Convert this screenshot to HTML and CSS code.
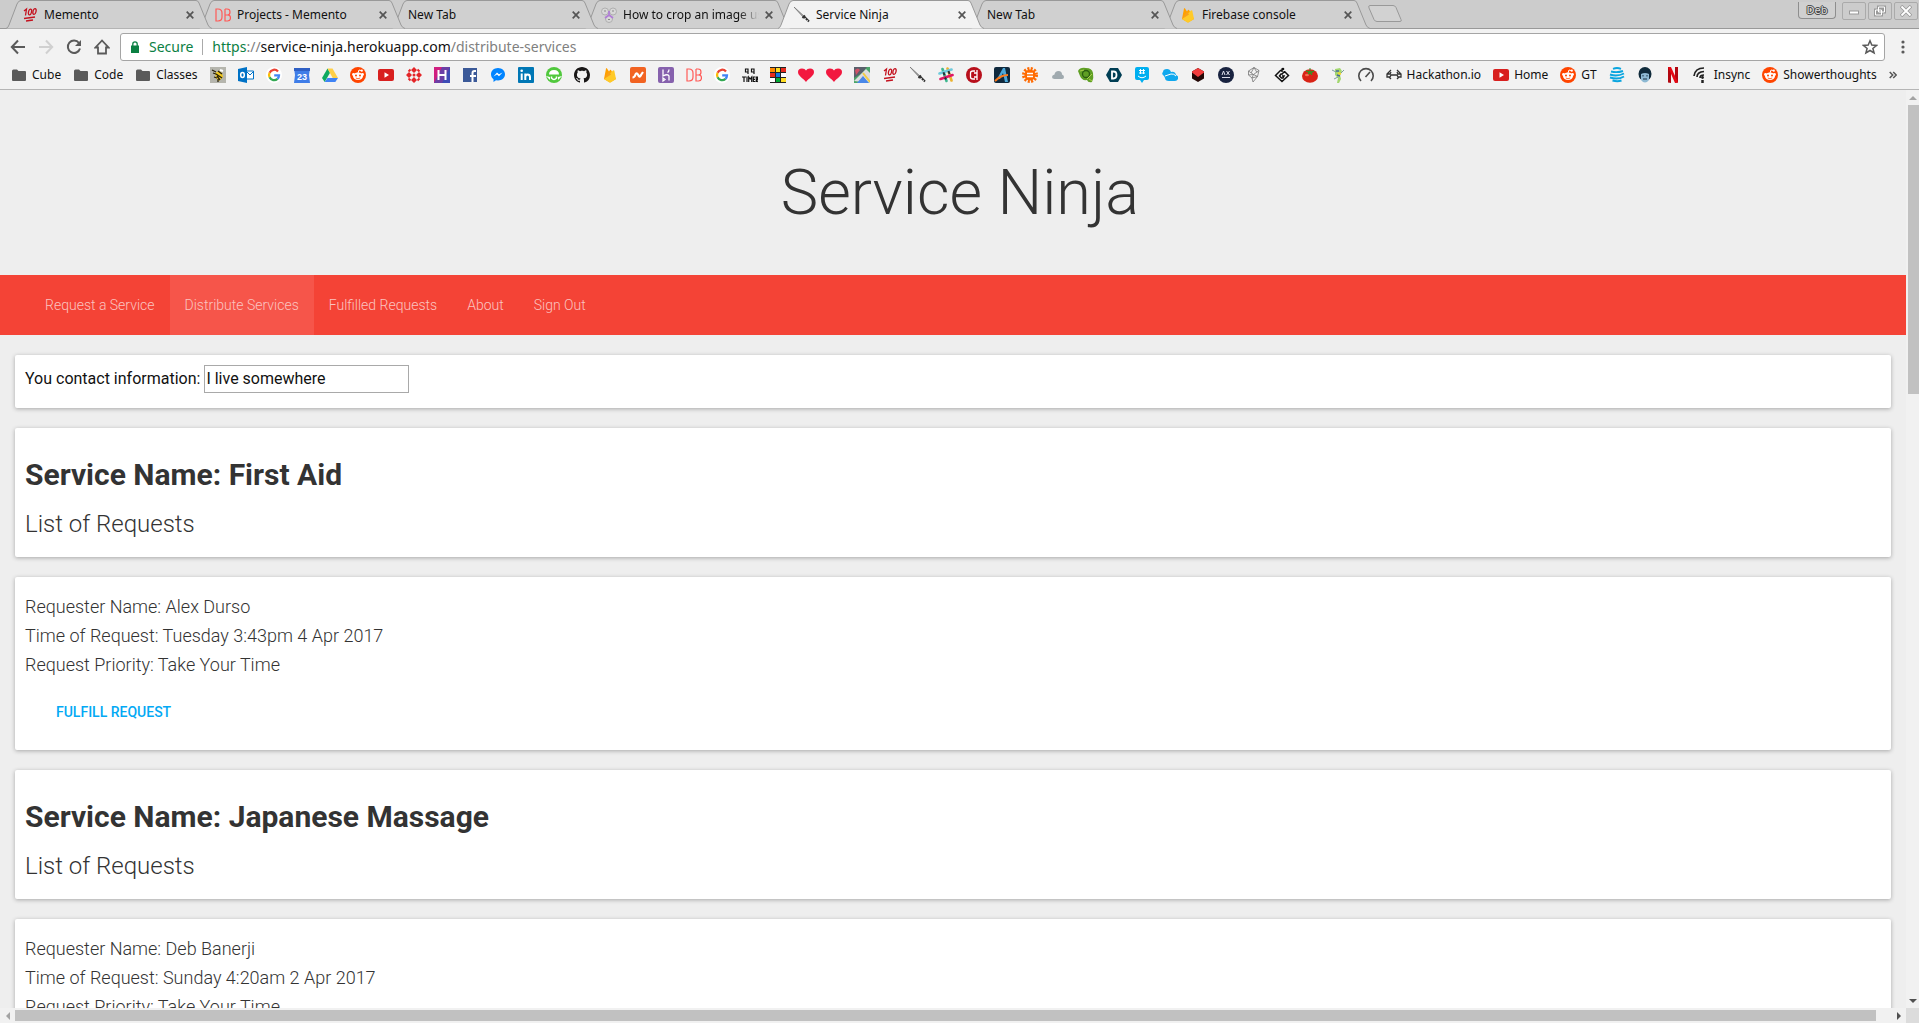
FILE: index.html
```html
<!DOCTYPE html>
<html lang="en">
<head>
<meta charset="utf-8">
<title>Service Ninja</title>
<link rel="stylesheet" href="styles.css">
</head>
<body>
<svg class="sprite" aria-hidden="true">
  <symbol id="tab" viewBox="0 0 206 29"><path d="M0 28.5Q2 28 3 25L11 4Q12.500 .5 15 .5H190Q192 .5 193 3L202 25Q203.500 28 206 28.500"/></symbol>
  <symbol id="x" viewBox="0 0 8 8"><path d="M.7.7l6.600 6.600M7.300.7L.7 7.300" stroke="#555" stroke-width="1.700"/></symbol>
  <symbol id="folder" viewBox="0 0 16 16"><path d="M1 4q0-1.500 1.500-1.500H6L7.500 4H14q1 0 1 1v8q0 1-1 1H2q-1 0-1-1z" fill="#5a5a5a"/></symbol>
  <symbol id="hundred" viewBox="0 0 16 16"><g fill="none" stroke="#c4121f" stroke-width="1.300"><path d="M2 4l2.500-2-1 6.500"/><ellipse cx="8" cy="5" rx="1.500" ry="3" transform="rotate(14 8 5)"/><ellipse cx="12.500" cy="4.500" rx="1.500" ry="3" transform="rotate(14 12.500 4.500)"/><path d="M2 11.500l11-1.500M4 14l7-1"/></g></symbol>
  <symbol id="db" viewBox="0 0 16 16"><path d="M1 2v12h2q4 0 4-4V6q0-4-4-4zM10 2v12h2.500q3 0 3-3t-3-3H10M12.500 8Q15 8 15 5t-3-3h-2" fill="none" stroke="#ff5a57" stroke-width="1.200"/></symbol>
  <symbol id="fire" viewBox="0 0 16 16"><path d="M2 12L4 1.500q.5-.8 1 0l2 3 1-1.500q.5-.6 1 0L14 12l-6 3.500z" fill="#ffa000"/><path d="M2 12l9-8.500q1-.8 1.300.3L14 12l-5 3.200q-1 .6-2 0z" fill="#ffca28"/><path d="M2 12l5-7.500 2 3z" fill="#f9a01b"/></symbol>
  <symbol id="sword" viewBox="0 0 16 16"><path d="M0 0l11 10-1 1z" fill="#aaa" stroke="#777" stroke-width=".8"/><path d="M8.500 11L11 8.500M10 9.500l5 5" stroke="#333" stroke-width="2"/><path d="M11 12l1-1M13 14l1-1" stroke="#bbb"/></symbol>
  <symbol id="google" viewBox="0 0 16 16"><circle cx="8" cy="8" r="8" fill="#fff"/><g fill="none" stroke-width="2.300"><path d="M12 4.500A5 5 0 0 0 3.600 5.700" stroke="#ea4335"/><path d="M3.600 5.700a5 5 0 0 0 0 4.600" stroke="#fbbc05"/><path d="M3.600 10.300a5 5 0 0 0 7.900 1.500" stroke="#34a853"/><path d="M11.500 11.800Q13 10.500 13 8.300H8.200" stroke="#4285f4"/></g></symbol>
  <symbol id="reddit" viewBox="0 0 16 16"><circle cx="8" cy="8" r="8" fill="#ff4500"/><path d="M8 6l1-3 2.500.6" fill="none" stroke="#fff"/><circle cx="11.800" cy="3.700" r="1.100" fill="#fff"/><circle cx="3.500" cy="7.500" r="1.400" fill="#fff"/><circle cx="12.500" cy="7.500" r="1.400" fill="#fff"/><ellipse cx="8" cy="9.300" rx="4.900" ry="3.800" fill="#fff"/><circle cx="6" cy="8.500" r="1" fill="#ff4500"/><circle cx="10" cy="8.500" r="1" fill="#ff4500"/><path d="M5.800 11q2.200 1.500 4.400 0" fill="none" stroke="#ff4500" stroke-width=".8"/></symbol>
  <symbol id="youtube" viewBox="0 0 16 16"><rect y="2" width="16" height="12" rx="2" fill="#d8201f"/><path d="M6.500 5.300L11 8l-4.500 2.700z" fill="#fff"/></symbol>
  <symbol id="heart" viewBox="0 0 16 16"><path d="M8 15C5 11 0 9 0 5Q0 1.500 4 1.500q3 0 4 2 1-2 4-2 4 0 4 3.500c0 4-5 6-8 10z" fill="#f2183f"/></symbol>
</svg>

<header class="browser">
  <div class="tabstrip">
    <div class="tabs">
      <div class="tab t1"><svg class="shape"><use href="#tab"/></svg><svg><use href="#hundred"/></svg><span class="title">Memento</span><button class="close" aria-label="Close"><svg><use href="#x"/></svg></button></div>
      <div class="tab t2"><svg class="shape"><use href="#tab"/></svg><svg><use href="#db"/></svg><span class="title">Projects - Memento</span><button class="close" aria-label="Close"><svg><use href="#x"/></svg></button></div>
      <div class="tab t3"><svg class="shape"><use href="#tab"/></svg><span class="title">New Tab</span><button class="close" aria-label="Close"><svg><use href="#x"/></svg></button></div>
      <div class="tab t4"><svg class="shape"><use href="#tab"/></svg><svg viewBox="0 0 16 16"><g fill="#d8d8d8" stroke="#aaa" stroke-width=".9"><circle cx="4" cy="4.500" r="3.500"/><circle cx="12" cy="4.500" r="3.500"/><circle cx="8" cy="12" r="3.500"/></g><path d="M8 4v5M8 8l-4 3M8 8l4 3" stroke="#b07fd6" stroke-width="1.800"/><path d="M3 4h2M11 4h2M7 12.500h2" stroke="#888"/></svg><span class="title fade">How to crop an image using</span><button class="close" aria-label="Close"><svg><use href="#x"/></svg></button></div>
      <div class="tab active"><svg class="shape"><use href="#tab"/></svg><svg><use href="#sword"/></svg><span class="title">Service Ninja</span><button class="close" aria-label="Close"><svg><use href="#x"/></svg></button></div>
      <div class="tab t2"><svg class="shape"><use href="#tab"/></svg><span class="title">New Tab</span><button class="close" aria-label="Close"><svg><use href="#x"/></svg></button></div>
      <div class="tab"><svg class="shape"><use href="#tab"/></svg><svg><use href="#fire"/></svg><span class="title">Firebase console</span><button class="close" aria-label="Close"><svg><use href="#x"/></svg></button></div>
    </div>
    <button class="newtab" aria-label="New tab"><svg viewBox="0 0 36 18"><path d="M3 .5h23q2 0 3 2l5 12q1 2-1 2H10q-2 0-3-2L2 3Q1 .5 3 .5z" fill="#d2d2d2" stroke="#999"/></svg></button>
    <div class="window">
      <button class="user">Deb</button>
      <button class="win" aria-label="Minimize"><svg viewBox="0 0 12 12"><path d="M1 7.500h10" stroke="#999" stroke-width="4"/><path d="M2 7.500h8" stroke="#fff" stroke-width="2"/></svg></button>
      <button class="win" aria-label="Restore"><svg viewBox="0 0 12 12"><g fill="none"><path d="M4.500 2h6v5h-6zM1.500 5h6v5h-6z" stroke="#999" stroke-width="3"/><path d="M4.500 2h6v5h-6zM1.500 5h6v5h-6z" stroke="#fff"/></g></svg></button>
      <button class="win" aria-label="Close window"><svg viewBox="0 0 12 12"><path d="M1 1l10 10M11 1L1 11" stroke="#999" stroke-width="3.500"/><path d="M1.500 1.500l9 9M10.500 1.500l-9 9" stroke="#fff" stroke-width="1.800"/></svg></button>
    </div>
  </div>

  <div class="toolbar">
    <button class="tool" aria-label="Back"><svg viewBox="0 0 16 16"><path d="M15 8H2M8 1.500L1.800 8 8 14.500" fill="none" stroke="#5a5a5a" stroke-width="2"/></svg></button>
    <button class="tool" aria-label="Forward"><svg viewBox="0 0 16 16"><path d="M1 8h13M8 1.500L14.200 8 8 14.500" fill="none" stroke="#d0d0d0" stroke-width="2"/></svg></button>
    <button class="tool" aria-label="Reload"><svg viewBox="0 0 16 16"><path d="M13 4A6.200 6.200 0 1 0 14 9.500" fill="none" stroke="#5a5a5a" stroke-width="2"/><path d="M15 1v6H9z" fill="#5a5a5a"/></svg></button>
    <button class="tool" aria-label="Home"><svg viewBox="0 0 16 16"><path d="M8 1.500L1.500 8.500H4v6h8v-6h2.500z" fill="none" stroke="#5a5a5a" stroke-width="1.800"/></svg></button>
    <div class="omnibox">
      <svg class="lock" viewBox="0 0 8 12"><path d="M0 4.500h8V12H0z" fill="#0b8043"/><path d="M1.800 5V3a2.200 2.200 0 0 1 4.400 0v2" fill="none" stroke="#0b8043" stroke-width="1.300"/></svg>
      <span class="secure">Secure</span>
      <span class="url"><span class="green">https</span>://<span class="host">service-ninja.herokuapp.com</span>/distribute-services</span>
      <button class="star" aria-label="Bookmark"><svg viewBox="0 0 16 16"><path d="M8 1.800l1.800 4.300 4.700.3-3.600 3 1.200 4.600L8 11.500 3.900 14l1.200-4.600-3.600-3 4.700-.3z" fill="none" stroke="#5a5a5a" stroke-width="1.500"/></svg></button>
    </div>
    <button class="menu" aria-label="Menu"><svg viewBox="0 0 4 14"><g fill="#5a5a5a"><circle cx="2" cy="2" r="1.600"/><circle cx="2" cy="7" r="1.600"/><circle cx="2" cy="12" r="1.600"/></g></svg></button>
  </div>

  <nav class="bookmarks" aria-label="Bookmarks">
    <a href="#"><svg><use href="#folder"/></svg>Cube</a>
    <a href="#"><svg><use href="#folder"/></svg>Code</a>
    <a href="#"><svg><use href="#folder"/></svg>Classes</a>
    <a href="#" aria-label="Bee"><svg viewBox="0 0 16 16"><path d="M0 0h16v16H0z" fill="#b5b5ad"/><path d="M5 6l4-2 3 2 1 4-4 4-3-3z" fill="#f0c820"/><path d="M2 3l4 2M3 6l3 1M8 4l4 3M6 7l6 4M4 10l3 1M8 12v3M7 9l3 4" stroke="#28220c" stroke-width="1.300"/><path d="M10 3l3 1" stroke="#fff" stroke-width="2"/></svg></a>
    <a href="#" aria-label="Outlook"><svg viewBox="0 0 16 16"><path d="M8 4h7.500v8H8z" fill="#fff" stroke="#0072c6"/><path d="M9 5l3 3 3-3" fill="none" stroke="#0072c6"/><path d="M0 2l9-2v16l-9-2z" fill="#0072c6"/><ellipse cx="4.500" cy="8" rx="1.800" ry="2.500" fill="none" stroke="#fff" stroke-width="1.500"/></svg></a>
    <a href="#" aria-label="Google"><svg><use href="#google"/></svg></a>
    <a href="#" aria-label="Calendar"><svg viewBox="0 0 16 16"><path d="M0 1h16l-1 7 1 8H0l1-8z" fill="#3f7de8"/><path d="M0 1h16v3H0z" fill="#2f5fc4"/><text x="8" y="13" class="day">23</text></svg></a>
    <a href="#" aria-label="Drive"><svg viewBox="0 0 16 16"><path d="M5.500 1.500L0 11l2.700 4L8 5.800z" fill="#0da960"/><path d="M5.500 1.500h5L16 11h-5.300z" fill="#ffcf48"/><path d="M5.500 11H16l-2.700 4H2.700z" fill="#3f83f5"/></svg></a>
    <a href="#" aria-label="Reddit"><svg><use href="#reddit"/></svg></a>
    <a href="#" aria-label="YouTube"><svg><use href="#youtube"/></svg></a>
    <a href="#" aria-label="Lattice"><svg viewBox="0 0 16 16"><g fill="#e42528"><path d="M8 0l3 3-3 3-3-3zM8 10l3 3-3 3-3-3zM0 8l3-3 3 3-3 3zM10 8l3-3 3 3-3 3z"/><circle cx="8" cy="8" r="1.500"/></g><path d="M2.500 4.500l2-2M11.500 2.500l2 2M2.500 11.500l2 2M11.500 13.500l2-2" stroke="#e42528" stroke-width="1.800"/></svg></a>
    <a href="#" aria-label="Hackathons"><svg viewBox="0 0 16 16"><path d="M0 0h16v16H0z" fill="#6b3fa5"/><path d="M0 0h8L0 16z" fill="#d01f80"/><path d="M8 16h8V0z" fill="#3d4cb5"/><path d="M4.500 3v10M11.500 3v10M4 8h8" stroke="#fff" stroke-width="2"/></svg></a>
    <a href="#" aria-label="Facebook"><svg viewBox="0 0 16 16"><path d="M1 1h14v14H1z" fill="#3b5998"/><path d="M10.500 15V8M8 9h6M10.500 9V6q0-2 2-2H14" fill="none" stroke="#fff" stroke-width="2"/></svg></a>
    <a href="#" aria-label="Messenger"><svg viewBox="0 0 16 16"><path d="M8 1c4 0 7 2.800 7 6.300s-3 6.200-7 6.200l-2-.2L3.500 15v-2.700C2 11.200 1 9.500 1 7.300 1 3.800 4 1 8 1z" fill="#0084ff"/><path d="M3.500 9.500L7 5.500l2 1.700 3.500-1.700L9 9.200 7 7.500z" fill="#fff"/></svg></a>
    <a href="#" aria-label="LinkedIn"><svg viewBox="0 0 16 16"><rect width="16" height="16" rx="1" fill="#0077b5"/><path d="M3.700 6.500V13M7.300 6.500V13M7.300 10q0-2.500 2.300-2.500T12 10v3" fill="none" stroke="#fff" stroke-width="2"/><circle cx="3.700" cy="3.700" r="1.300" fill="#fff"/></svg></a>
    <a href="#" aria-label="Forum"><svg viewBox="0 0 16 16"><circle cx="8" cy="8" r="8" fill="#50c83c"/><path d="M3 7.500q0-4.500 5-4.500t5 4.500zM0 9l4 1v3zM16 9l-4 1v3z" fill="#fff"/><path d="M5.500 9.500v1.500q2.500 3 5 0V9.500" fill="none" stroke="#fff" stroke-width="1.500"/></svg></a>
    <a href="#" aria-label="GitHub"><svg viewBox="0 0 16 16"><path fill="#191717" d="M8 0C3.580 0 0 3.580 0 8c0 3.540 2.290 6.530 5.470 7.590.4.070.55-.17.55-.38 0-.19-.01-.82-.01-1.490-2.010.37-2.530-.49-2.690-.94-.09-.23-.48-.94-.82-1.130-.28-.15-.68-.52-.01-.53.63-.01 1.080.58 1.230.82.72 1.210 1.870.87 2.330.66.07-.52.28-.87.51-1.070-1.780-.2-3.640-.89-3.640-3.950 0-.87.31-1.590.82-2.150-.08-.2-.36-1.020.08-2.120 0 0 .67-.21 2.200.82.64-.18 1.320-.27 2-.27s1.360.09 2 .27c1.530-1.040 2.200-.82 2.200-.82.44 1.100.16 1.920.08 2.120.51.56.82 1.270.82 2.150 0 3.070-1.870 3.750-3.650 3.950.29.25.54.73.54 1.480 0 1.070-.01 1.930-.01 2.200 0 .21.15.46.55.38A8.010 8.010 0 0 0 16 8c0-4.420-3.580-8-8-8z"/></svg></a>
    <a href="#" aria-label="Firebase"><svg><use href="#fire"/></svg></a>
    <a href="#" aria-label="Namecheap"><svg viewBox="0 0 16 16"><rect width="16" height="16" rx="2" fill="#f26322"/><path d="M2.500 10.500q2 0 3-3 1-2.500 2.500 0 1.500 4 3 .5l2-3" fill="none" stroke="#fff" stroke-width="2.200"/></svg></a>
    <a href="#" aria-label="Heroku"><svg viewBox="0 0 16 16"><rect width="16" height="16" rx="2" fill="#8661ad"/><path d="M5 2.500V9q5-2.500 6 0v4.500M11 2.500q0 2-1.500 3M5 11v3l2-1.500z" fill="none" stroke="#fff" stroke-width="1.300"/></svg></a>
    <a href="#" aria-label="Memento"><svg><use href="#db"/></svg></a>
    <a href="#" aria-label="Google"><svg><use href="#google"/></svg></a>
    <a href="#" aria-label="Timer"><svg viewBox="0 0 16 16"><g fill="none" stroke="#111" stroke-width="1.200"><path d="M6 7V2H3.500v3H6M12 7V2H9.500v3H12"/><path d="M0 10h4M2 10v5M5 9.500V15M6.700 15v-5l1.500 2 1.500-2v5M13.300 10h-2v4.500h2M11 12.300h2M14.300 15v-5h1.300v2.500h-1l1 2.500"/></g></svg></a>
    <a href="#" aria-label="Cube timer"><svg viewBox="0 0 16 16"><path d="M0 0h16v16H0z" fill="#222"/><path d="M0 1h5v4H0z" fill="#f80"/><path d="M6 1h4v4H6zM11 6h5v4h-5z" fill="#fff"/><path d="M6 1h4v4H6zM11 11h5v4h-5z" fill="#fd2"/><path d="M11 1h5v4h-5zM0 6h5v4H0z" fill="#e82a1c"/><path d="M6 6h4v4H6z" fill="#17d"/><path d="M0 11h5v4H0z" fill="#fff"/><path d="M6 11h4v4H6z" fill="#0a3"/></svg></a>
    <a href="#" aria-label="Heart"><svg><use href="#heart"/></svg></a>
    <a href="#" aria-label="Heart"><svg><use href="#heart"/></svg></a>
    <a href="#" aria-label="Maps"><svg viewBox="0 0 16 16"><path d="M0 0h16v16H0z" fill="#4aa568"/><path d="M0 0h13l-5 6-8 5z" fill="#59606b"/><path d="M0 14L12 2l4 4v10z" fill="#ddd"/><path d="M3 16l6-7 6 7z" fill="#4a88e8"/><path d="M1 3q3-3 5 0L2 8z" fill="#d05267"/><path d="M9 6l7 9" stroke="#f1cd45" stroke-width="2"/></svg></a>
    <a href="#" aria-label="Memento"><svg><use href="#hundred"/></svg></a>
    <a href="#" aria-label="Service Ninja"><svg><use href="#sword"/></svg></a>
    <a href="#" aria-label="Slack"><svg viewBox="0 0 16 16"><g stroke-width="2.600" stroke-linecap="round"><path d="M4.500 2l4 12" stroke="#3eb890"/><path d="M9.500 1.500l4 12" stroke="#ecb22e"/><path d="M1.500 6.500l12-4" stroke="#6ecadc"/><path d="M2.500 12l12-4" stroke="#e01765"/></g><path d="M5.500 5.300l1 3M10.500 4l1 3M7 10.500l1 2" stroke="#243238" stroke-width="2"/></svg></a>
    <a href="#" aria-label="Cardinal"><svg viewBox="0 0 16 16"><circle cx="8" cy="8" r="8" fill="#b8101c"/><path d="M9 4H7Q4.500 4 4.500 6v4q0 2 2.500 2h2M8 6h3v4H8M11 3v10" fill="none" stroke="#fff" stroke-width="1.300"/></svg></a>
    <a href="#" aria-label="Arc"><svg viewBox="0 0 16 16"><rect width="16" height="16" rx="2" fill="#102a3e"/><path d="M3 12L9 1h2l3 14h-3L9 6l-3 6z" fill="#4da8d9"/><path d="M1 14Q7 8 14 8" fill="none" stroke="#ff7a1a" stroke-width="2"/></svg></a>
    <a href="#" aria-label="Sun"><svg viewBox="0 0 16 16"><circle cx="8" cy="8" r="6.500" fill="none" stroke="#ff6a00" stroke-width="3" stroke-dasharray="2 1.400"/><circle cx="8" cy="8" r="5.600" fill="#ff6a00"/><path d="M5 6.500h6M5 9.500h6" stroke="#fff" stroke-width="1.500"/></svg></a>
    <a href="#" aria-label="Cloud"><svg viewBox="0 0 16 16"><path d="M4.500 12Q2 12 2 10t2.500-2.500Q5 4 8.500 4t3.500 3.500q2 .5 2 2.500t-2 2z" fill="#a0aaaf"/></svg></a>
    <a href="#" aria-label="Lizard"><svg viewBox="0 0 16 16"><path d="M0 4q2-4 8-3 6 0 7 5 1 5-1 9-4 1-5-2-5 1-7-4z" fill="#5f9f24"/><circle cx="8" cy="7" r="3.500" fill="none" stroke="#2b5d10" stroke-width="1.300"/><path d="M2 4l4-1M11 12l3 2M9 12l5-5" stroke="#a9d04c"/></svg></a>
    <a href="#" aria-label="Devpost"><svg viewBox="0 0 16 16"><path d="M4 1h8l4 7-4 7H4L0 8z" fill="#003e54"/><path d="M6 4.500v7h1.500q3 0 3-3.500t-3-3.500z" fill="none" stroke="#fff" stroke-width="1.800"/></svg></a>
    <a href="#" aria-label="GroupMe"><svg viewBox="0 0 16 16"><path d="M3 0h10q2 0 2 2v9q0 2-2 2h-3l-2 3-2-3H3q-2 0-2-2V2q0-2 2-2z" fill="#00aff0"/><path d="M6.500 2v5M9.500 2v5M5 3.500h6M5 6h6M4 9q4 3.500 8 0" fill="none" stroke="#fff"/></svg></a>
    <a href="#" aria-label="Cloud storage"><svg viewBox="0 0 16 16"><path d="M2 9Q-1 7 1 5q0-3 4-3 3 0 4 3 4-1 5 3 3 1 2 4-1 2-3 2H7q-4 0-4-3z" fill="#0fa8ee"/><path d="M3 9l6-2q3-.5 5 2" fill="none" stroke="#fff"/></svg></a>
    <a href="#" aria-label="Box"><svg viewBox="0 0 16 16"><path d="M8 1l6 3.500v7L8 15l-6-3.500v-7z" fill="#240806"/><path d="M8 1l6 3.500v1L8 10 2 5.500v-1z" fill="#f33c3c"/></svg></a>
    <a href="#" aria-label="AX"><svg viewBox="0 0 16 16"><circle cx="8" cy="8" r="8" fill="#192340"/><path d="M4 8l1.500-4L7 8M8.500 4l3 4M11.500 4l-3 4M4 10.500h8" fill="none" stroke="#d9dcea"/></svg></a>
    <a href="#" aria-label="Polyhedron"><svg viewBox="0 0 16 16"><path d="M8 .5l5 3-1.500 6L7 15l-1-4-3.500-3V4zM2.500 4l5 3.500L13 3.500M2.500 8l5-.5 4 2M8 .5L5 6M8 .5l3 5M7.500 7.500L6 11l5.500-1.500" fill="none" stroke="#777" stroke-width=".8"/></svg></a>
    <a href="#" aria-label="Diamond"><svg viewBox="0 0 16 16"><path d="M7 3L1.500 8.500l6.500 6 6.500-6-4-4M9 7H7L5.500 9l2 2H9l1-2H8M10.500 4.500L8 7M8 5V1.500" fill="none" stroke="#111" stroke-width="1.500"/><circle cx="9" cy="2" r="1.300" fill="#111"/></svg></a>
    <a href="#" aria-label="Tomato"><svg viewBox="0 0 16 16"><ellipse cx="8" cy="9" rx="8" ry="6.700" fill="#d92316"/><ellipse cx="5" cy="8" rx="2" ry="1.300" fill="#f66b50"/><path d="M8 1v4M4 4l4 1 4-1-3 2 1 2-2-2-2 1 1-2z" fill="#3c8d22" stroke="#3c8d22"/></svg></a>
    <a href="#" aria-label="Sprite"><svg viewBox="0 0 16 16"><path d="M5 2l5-1 2 3-2 4 1 4-2 4H7l1-5-3-3z" fill="#a3d76f"/><path d="M2 3l4 2M11 6l3-3M4 12l4-2" stroke="#7a9e9e"/><path d="M6 4h3M7 8l3 1" stroke="#49689c" stroke-width="1.500"/><path d="M8 6l3 1" stroke="#ecd331" stroke-width="2"/></svg></a>
    <a href="#" aria-label="Speed test"><svg viewBox="0 0 16 16"><path d="M3 14A7.200 7.200 0 1 1 13 14M7.500 10L12 5" fill="none" stroke="#4b4b4b" stroke-width="1.600"/></svg></a>
    <a href="#"><svg viewBox="0 0 16 16"><path d="M5 3L1 7v3h3l1-2h6l1 2h3V7l-4-4M1 7h3l1-2M15 7h-3l-1-2M3 10l2 2M13 10l-2 2" fill="none" stroke="#333" stroke-width="1.300"/></svg>Hackathon.io</a>
    <a href="#"><svg><use href="#youtube"/></svg>Home</a>
    <a href="#"><svg><use href="#reddit"/></svg>GT</a>
    <a href="#" aria-label="AT&amp;T"><svg viewBox="0 0 16 16"><g fill="none" stroke="#0aa5df" stroke-width="1.900"><path d="M4 1.800q4-1.500 8 0M2 4.500q6 1.500 12-.5M1 7.500Q8 10 15 6.500M1 10.500Q9 13 15 9.500M3.500 13.500q5 1.500 9 0"/></g></svg></a>
    <a href="#" aria-label="Monkey"><svg viewBox="0 0 16 16"><ellipse cx="8" cy="7" rx="6.500" ry="7" fill="#102b3b"/><path d="M4 7q4-2 8 0v6q-4 5-8 0z" fill="#8db9d3"/><path d="M6 8v1.500M10 8v1.500M6 12h4" stroke="#183040"/></svg></a>
    <a href="#" aria-label="Netflix"><svg viewBox="0 0 16 16"><path d="M3 0h3v16l-3-.5zM10 0h3v15.500l-3 .5z" fill="#b20710"/><path d="M3 0h3l7 15.500-3 .5z" fill="#e50914"/></svg></a>
    <a href="#"><svg viewBox="0 0 16 16"><g fill="none" stroke="#222" stroke-width="1.700"><path d="M1 9Q2 1 11 1M4 10q0-5 7-5.500M7 11q0-3 4-3"/></g><circle cx="9.500" cy="10.500" r="1.400" fill="#222"/><path d="M9.500 13v3" stroke="#222" stroke-width="2.500"/></svg>Insync</a>
    <a href="#"><svg><use href="#reddit"/></svg>Showerthoughts</a>
    <button class="more" aria-label="More bookmarks"><svg viewBox="0 0 8 8"><path d="M.7 1l3 3-3 3M4.200 1l3 3-3 3" fill="none" stroke="#555" stroke-width="1.500"/></svg></button>
  </nav>
</header>

<div class="viewport">
  <div class="page">
    <div class="hero"><h1>Service Ninja</h1></div>
    <nav class="navbar">
      <a href="#">Request a Service</a>
      <a href="#" class="current">Distribute Services</a>
      <a href="#">Fulfilled Requests</a>
      <a href="#">About</a>
      <a href="#">Sign Out</a>
    </nav>
    <main>
      <section class="card contact">
        <label for="contact">You contact information:</label>
        <input id="contact" type="text" value="I live somewhere">
      </section>
      <section class="card service">
        <h2>Service Name: First Aid</h2>
        <h3>List of Requests</h3>
      </section>
      <section class="card request">
        <p>Requester Name: Alex Durso</p>
        <p>Time of Request: Tuesday 3:43pm 4 Apr 2017</p>
        <p>Request Priority: Take Your Time</p>
        <button>Fulfill Request</button>
      </section>
      <section class="card service">
        <h2>Service Name: Japanese Massage</h2>
        <h3>List of Requests</h3>
      </section>
      <section class="card request">
        <p>Requester Name: Deb Banerji</p>
        <p>Time of Request: Sunday 4:20am 2 Apr 2017</p>
        <p>Request Priority: Take Your Time</p>
      </section>
    </main>
  </div>
  <div class="vbar"><i class="arrow up"></i><div class="track"><div class="thumb"></div></div><i class="arrow down"></i></div>
  <div class="hbar"><i class="arrow left"></i><div class="track"><div class="thumb"></div></div><i class="arrow right"></i></div>
  <div class="corner"></div>
</div>
</body>
</html>
```
FILE: styles.css
```css
* { box-sizing: border-box; }

body {
  margin: 0;
  height: 100vh;
  display: flex;
  flex-direction: column;
  overflow: hidden;
  background: #eee;
  font-family: Roboto, sans-serif;
  color: #333;
}

button { border: 0; padding: 0; background: none; font: inherit; color: inherit; }
a { text-decoration: none; color: inherit; }
svg { display: block; flex: none; width: 16px; height: 16px; }
.sprite { position: absolute; width: 0; height: 0; }

/* Browser chrome */
.browser {
  flex: none;
  background: #f2f2f2;
  border-bottom: 1px solid #b5b5b5;
  font: 12px/16px "Noto Sans", sans-serif;
  color: #111;
}

.tabstrip {
  display: flex;
  height: 29px;
  background: #ccc;
  border-bottom: 1px solid #999;
}
.tabs { display: flex; padding-left: 6px; }
.tab {
  position: relative;
  isolation: isolate;
  display: flex;
  align-items: center;
  gap: 6px;
  flex: none;
  width: 206px;
  height: 29px;
  margin-right: -13px;
  padding: 0 18px 0 16px;
}
.t1 { z-index: 4; }
.t2 { z-index: 3; }
.t3 { z-index: 2; }
.t4 { z-index: 1; }
.active { z-index: 5; }
.shape {
  position: absolute;
  inset: 0;
  z-index: -1;
  width: 206px;
  height: 29px;
  fill: #d0d0d0;
  stroke: #999;
}
.active .shape { fill: #f2f2f2; }
.title { flex: 1; overflow: hidden; white-space: nowrap; }
.fade { mask-image: linear-gradient(to right, #000 85%, transparent); }
.close svg { width: 8px; height: 8px; }
.newtab { align-self: center; margin-left: 10px; }
.newtab svg { width: 36px; height: 18px; }

.window { display: flex; align-items: flex-start; gap: 2px; margin-left: auto; padding: 2px 1px; }
.user {
  width: 38px;
  height: 17px;
  margin-right: 4px;
  border: 1px solid #8e8e8e;
  border-top: 0;
  border-radius: 0 0 4px 4px;
  background: #d0d0d0;
  font-size: 11px;
  line-height: 16px;
  color: #ddd;
  text-shadow: 1px 0 #444, -1px 0 #444, 0 1px #444, 0 -1px #444;
}
.win {
  display: grid;
  place-items: center;
  width: 24px;
  height: 18px;
  border: 1px solid #aaa;
  border-radius: 2px;
}
.win svg { width: 12px; height: 12px; }

.toolbar { display: flex; align-items: center; gap: 12px; height: 36px; padding: 0 14px 0 10px; }
.omnibox {
  display: flex;
  align-items: center;
  flex: 1;
  height: 28px;
  margin: 0 4px 0 -2px;
  padding: 0 6px 0 10px;
  border: 1px solid #a5a5a5;
  border-radius: 3px;
  background: #fff;
  font-size: 14px;
  line-height: 20px;
}
.lock { width: 8px; height: 12px; }
.secure { margin-left: 10px; padding-right: 9px; border-right: 1px solid #aaa; color: #0b8043; line-height: 16px; }
.url { margin-left: 9px; color: #808080; }
.green { color: #0b8043; }
.host { color: #111; }
.star { margin-left: auto; }
.menu svg { width: 4px; height: 14px; }

.bookmarks { display: flex; align-items: center; gap: 12px; height: 24px; padding: 0 24px 4px 11px; }
.bookmarks a { display: flex; align-items: center; gap: 5px; white-space: nowrap; }
.more svg { width: 8px; height: 8px; }
.day { font: bold 9px "Liberation Sans", sans-serif; fill: #fff; text-anchor: middle; }

/* Page and its scrollbars */
.viewport {
  flex: 1;
  min-height: 0;
  display: grid;
  grid-template-columns: minmax(0, 1fr) 13px;
  grid-template-rows: minmax(0, 1fr) 15px;
}
.page { overflow: hidden; }

.vbar, .hbar { display: flex; align-items: center; background: #f1f1f1; }
.vbar { flex-direction: column; }
.track { flex: 1; display: grid; }
.vbar .track { width: 11px; margin-left: 2px; grid-template-rows: 13fr 27fr; }
.hbar .track { height: 11px; grid-template-columns: 124fr 1fr; }
.thumb { background: #c1c1c1; }
.arrow { display: grid; place-items: center; width: 15px; height: 15px; flex: none; }
.arrow::before { content: ""; border: 4px solid transparent; }
.up::before { border-top: 0; border-bottom-color: #a3a3a3; }
.down::before { border-bottom: 0; border-top-color: #505050; }
.left::before { border-left: 0; border-right-color: #a3a3a3; }
.right::before { border-right: 0; border-left-color: #505050; }
.corner { background: #dcdcdc; }

/* Site */
.hero { height: 185px; padding: 65px 0 0 14px; text-align: center; }
.hero h1 { margin: 0; font-size: 63px; line-height: 76px; font-weight: 300; }

.navbar { display: flex; padding-left: 30px; background: #f44336; }
.navbar a { padding: 20px 15px; font-size: 14px; line-height: 20px; font-weight: 300; color: #fbc4c0; }
.navbar .current { background: #f6554a; }

main { display: flex; flex-direction: column; gap: 20px; padding: 20px 15px; }
.card {
  padding: 10px;
  border-radius: 2px;
  background: #fff;
  box-shadow: 0 1px 4px rgba(0, 0, 0, .3);
}
.contact { display: flex; gap: 4px; padding-bottom: 15px; font-size: 16px; line-height: 28px; color: #111; }
.contact input {
  width: 205px;
  height: 28px;
  padding: 0 1px 2px;
  border: 1px solid #a9a9a9;
  font: inherit;
  line-height: 20px;
  color: inherit;
}
.service { padding: 30px 10px 17px; }
.service h2 { margin: 0; font-size: 30px; line-height: 34px; font-weight: 700; }
.service h3 { margin: 16px 0 0; font-size: 24px; line-height: 32px; font-weight: 300; }
.request { padding: 15px 10px 20px; font-size: 18px; line-height: 29px; font-weight: 300; }
.request p { margin: 0; }
.request button {
  display: block;
  margin-top: 15px;
  padding: 0 31px;
  font-size: 14px;
  line-height: 36px;
  font-weight: 500;
  text-transform: uppercase;
  color: #03a9f4;
}
```
